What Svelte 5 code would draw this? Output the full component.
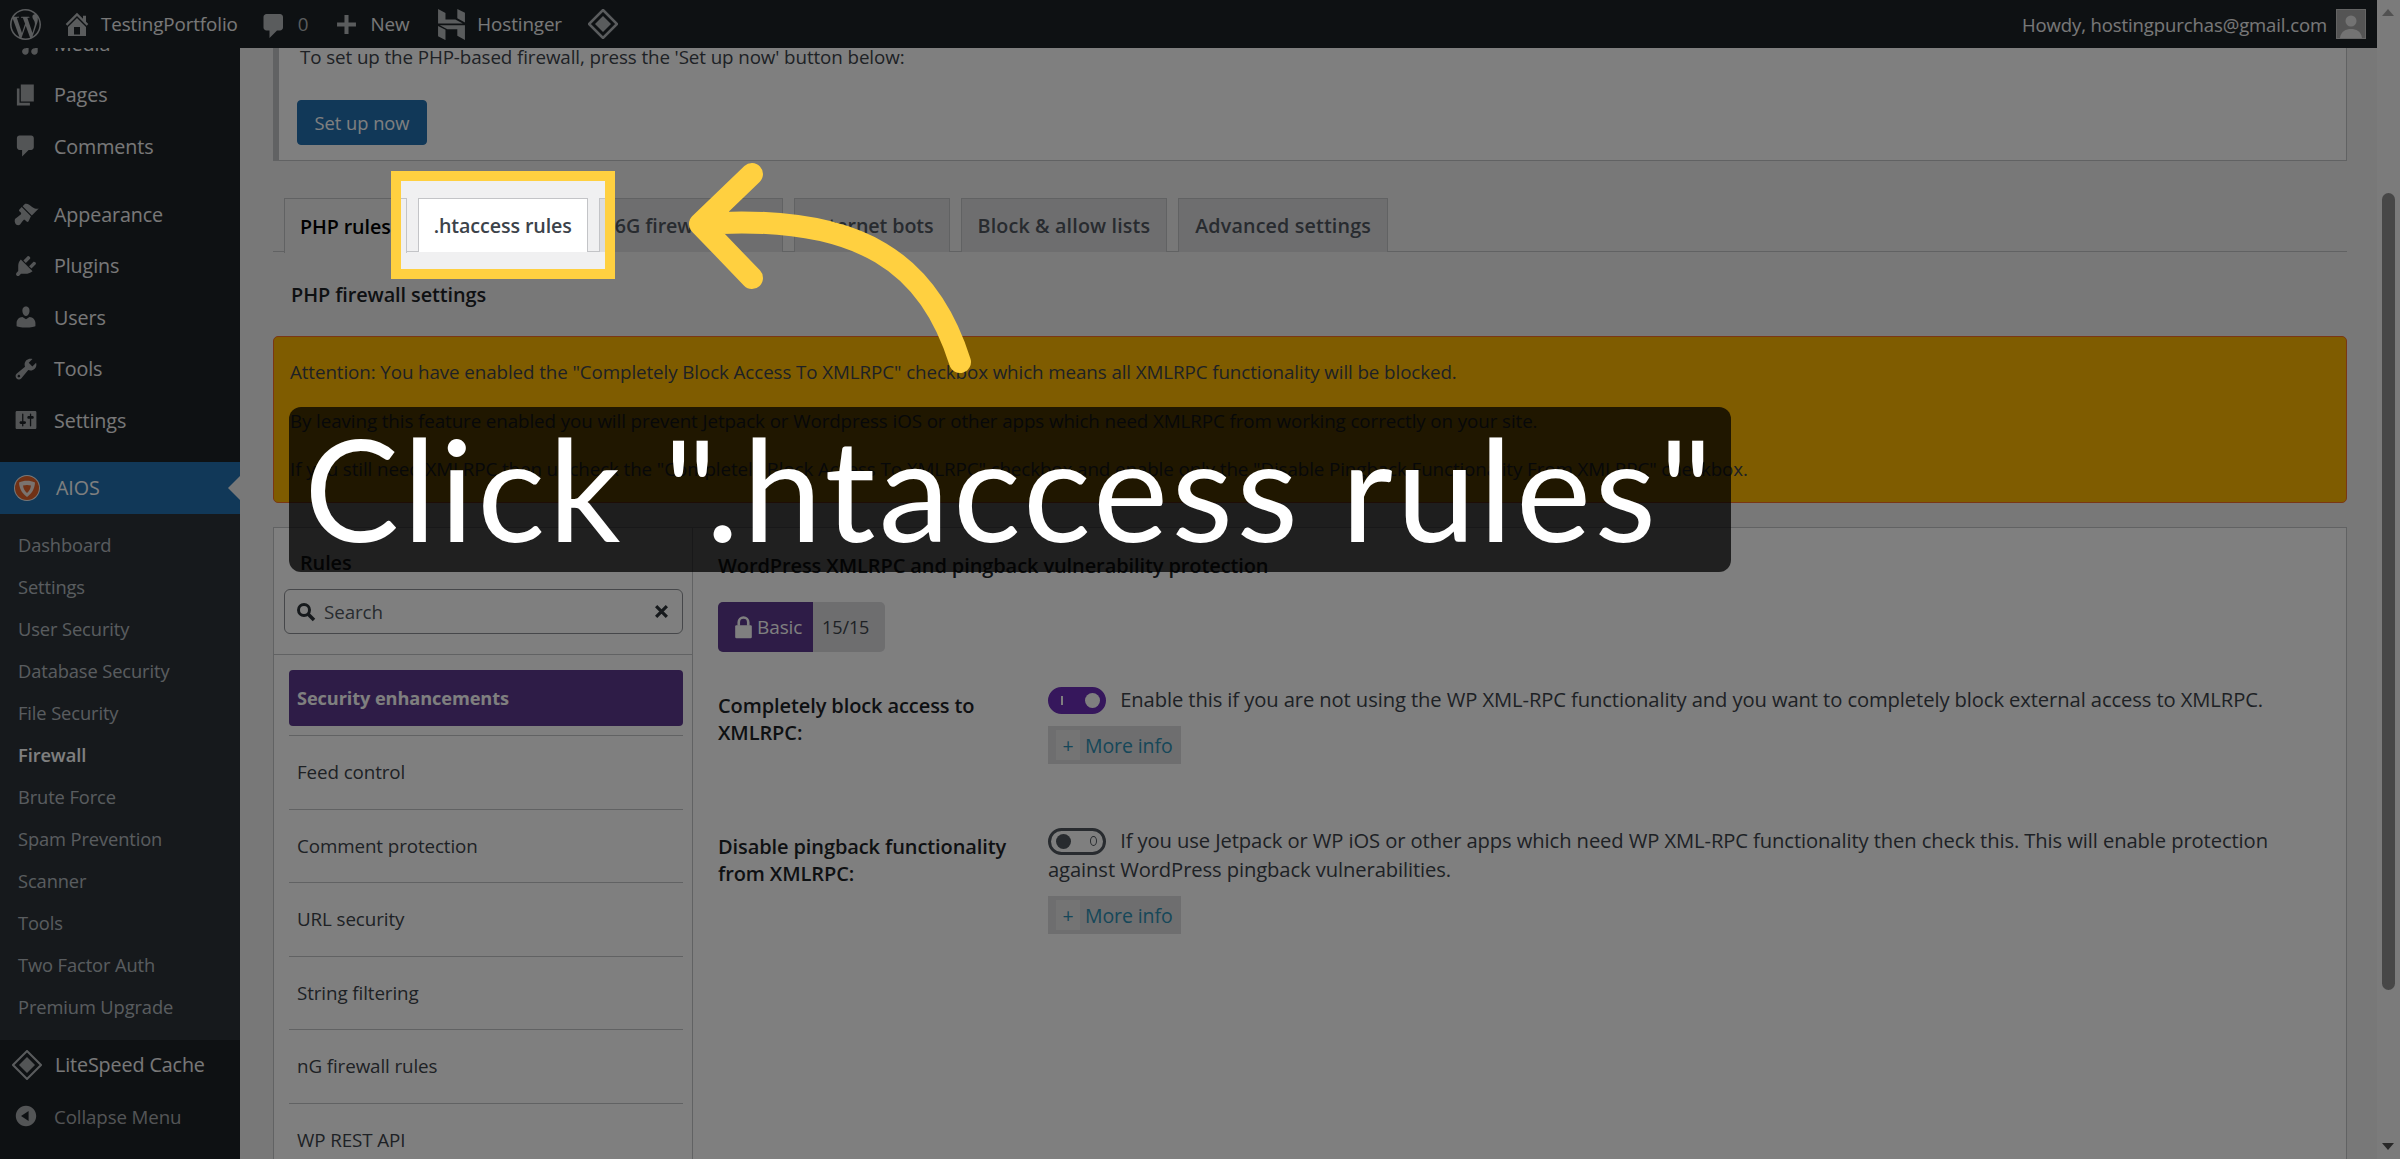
<script>
	const ICONS = {
		media: 'M13 11V4c0-.55-.45-1-1-1h-1.67L9 1H5L3.67 3H2c-.55 0-1 .45-1 1v7c0 .55.45 1 1 1h10c.55 0 1-.45 1-1zM7 4.5c1.38 0 2.5 1.12 2.5 2.5S8.38 9.5 7 9.5 4.5 8.38 4.5 7 5.62 4.5 7 4.5zM14 6h5v10.5c0 1.38-1.12 2.5-2.5 2.5S14 17.88 14 16.5s1.12-2.5 2.5-2.5c.17 0 .34.02.5.05V9h-3V6zm-4 8.05V13h2v3.5c0 1.38-1.12 2.5-2.5 2.5S7 17.88 7 16.5 8.12 14 9.5 14c.17 0 .34.02.5.05z',
		pages: 'M6 15V2h10v13H6zm-1 1h8v2H3V5h2v11z',
		comments: 'M5 2h9c1.1 0 2 .9 2 2v7c0 1.1-.9 2-2 2h-2l-5 5v-5H5c-1.1 0-2-.9-2-2V4c0-1.1.9-2 2-2z',
		appearance: 'M14.48 11.06L7.41 3.99l1.5-1.5c.5-.56 2.3-.47 3.51.32 1.21.8 1.43 1.28 2.91 2.1 1.18.64 2.45 1.26 4.45.85zm-.71.71L6.7 4.7 4.93 6.47c-.39.39-.39 1.02 0 1.41l1.06 1.06c.39.39.39 1.03 0 1.42-.6.6-1.43 1.11-2.21 1.69-.35.26-.7.53-1.01.84C1.43 13.23.91 15.05 1.64 16.9c.79 1.99 2.85 2.06 3.81 1.1.31-.31.58-.66.84-1.01.58-.78 1.09-1.61 1.69-2.21.39-.39 1.03-.39 1.42 0l1.06 1.06c.39.39 1.02.39 1.41 0z',
		plugins: 'M13.11 4.36L9.87 7.6 8 5.73l3.24-3.24c.35-.34 1.05-.2 1.56.32.52.51.66 1.21.31 1.55zm-8 1.77l.91-1.12 9.01 9.01-1.19.84c-.71.71-2.63 1.16-3.82 1.16H6.14L4.9 17.26c-.59.59-1.54.59-2.12 0-.59-.58-.59-1.53 0-2.12l1.24-1.24v-3.88c0-1.13.4-3.19 1.09-3.89zm7.26 3.97l3.24-3.24c.34-.35 1.04-.21 1.55.31.52.51.66 1.21.31 1.55l-3.24 3.25z',
		users: 'M10 9.25c-2.27 0-2.73-3.44-2.73-3.44C7 4.02 7.82 2 9.97 2c2.16 0 2.98 2.02 2.71 3.81 0 0-.41 3.44-2.68 3.44zm0 2.57L12.72 10c2.39 0 4.52 2.33 4.52 4.53v2.49s-3.65 1.13-7.24 1.13c-3.65 0-7.24-1.13-7.24-1.13v-2.49c0-2.25 1.94-4.48 4.47-4.48z',
		tools: 'M16.68 9.77c-1.34 1.34-3.3 1.67-4.95.99l-5.41 6.52c-.99.99-2.59.99-3.58 0s-.99-2.59 0-3.57l6.52-5.42c-.68-1.65-.35-3.61.99-4.95 1.28-1.28 3.12-1.62 4.72-1.06l-2.89 2.89 2.82 2.82 2.86-2.87c.53 1.58.18 3.39-1.08 4.65zM3.81 16.21c.4.39 1.04.39 1.43 0 .4-.4.4-1.04 0-1.43-.39-.4-1.03-.4-1.43 0-.39.39-.39 1.03 0 1.43z',
		settings: 'M18 16V4c0-.55-.45-1-1-1H3c-.55 0-1 .45-1 1v12c0 .55.45 1 1 1h14c.55 0 1-.45 1-1zM8 11h1c.55 0 1 .45 1 1s-.45 1-1 1H8v1.5c0 .28-.22.5-.5.5s-.5-.22-.5-.5V13H6c-.55 0-1-.45-1-1s.45-1 1-1h1V5.5c0-.28.22-.5.5-.5s.5.22.5.5V11zm5-2h-1c-.55 0-1-.45-1-1s.45-1 1-1h1V5.5c0-.28.22-.5.5-.5s.5.22.5.5V7h1c.55 0 1 .45 1 1s-.45 1-1 1h-1v5.5c0 .28-.22.5-.5.5s-.5-.22-.5-.5V9z',
		collapse: 'M10 2.16c4.33 0 7.84 3.51 7.84 7.84s-3.51 7.84-7.84 7.84S2.16 14.33 2.16 10 5.71 2.16 10 2.16zm2 11.72V6.12L6.18 9.97z',
		home: 'M16 8.5l1.53 1.53-1.06 1.06L10 4.62l-6.47 6.47-1.06-1.06L10 2.5l4 4v-2h2v4zm-6-2.46l6 5.99V18H4v-5.97zM12 17v-5H8v5h4z'
	};
	const WP_LOGO = 'M21.469 6.825c.84 1.537 1.318 3.3 1.318 5.175 0 3.979-2.156 7.456-5.363 9.325l3.295-9.527c.615-1.54.82-2.771.82-3.864 0-.405-.026-.78-.07-1.11m-7.981.105c.647-.03 1.232-.105 1.232-.105.582-.075.514-.93-.067-.899 0 0-1.755.135-2.88.135-1.064 0-2.85-.15-2.85-.15-.585-.03-.661.855-.075.885 0 0 .54.061 1.125.09l1.68 4.605-2.37 7.08L5.354 6.9c.649-.03 1.234-.1 1.234-.1.585-.075.516-.93-.065-.896 0 0-1.746.138-2.874.138-.2 0-.438-.008-.69-.015C4.911 3.15 8.235 1.215 12 1.215c2.809 0 5.365 1.072 7.286 2.833-.046-.003-.091-.009-.141-.009-1.06 0-1.812.923-1.812 1.914 0 .89.513 1.643 1.06 2.531.411.72.89 1.643.89 2.977 0 .915-.354 1.994-.821 3.479l-1.075 3.585-3.9-11.61.001.014zM12 22.784c-1.059 0-2.081-.153-3.048-.437l3.237-9.406 3.315 9.087c.024.053.05.101.078.149-1.12.393-2.325.609-3.582.609M1.211 12c0-1.564.336-3.05.935-4.39L7.29 21.709C3.694 19.96 1.212 16.271 1.211 12M12 0C5.385 0 0 5.385 0 12s5.385 12 12 12 12-5.385 12-12S18.615 0 12 0';

	const topMenu = [
		{ label: 'Media', icon: 'media' },
		{ label: 'Pages', icon: 'pages' },
		{ label: 'Comments', icon: 'comments', sep: true },
		{ label: 'Appearance', icon: 'appearance' },
		{ label: 'Plugins', icon: 'plugins' },
		{ label: 'Users', icon: 'users' },
		{ label: 'Tools', icon: 'tools' },
		{ label: 'Settings', icon: 'settings' }
	];
	const subMenu = ['Dashboard', 'Settings', 'User Security', 'Database Security', 'File Security', 'Firewall', 'Brute Force', 'Spam Prevention', 'Scanner', 'Tools', 'Two Factor Auth', 'Premium Upgrade'];
	const tabs = [
		{ label: 'PHP rules', active: true },
		{ label: '.htaccess rules', hover: true },
		{ label: '6G firewall rules' },
		{ label: 'Internet bots' },
		{ label: 'Block & allow lists' },
		{ label: 'Advanced settings' }
	];
	const ruleGroups = ['Feed control', 'Comment protection', 'URL security', 'String filtering', 'nG firewall rules', 'WP REST API'];
</script>

<div class="page">
	<div class="app">
		<header class="adminbar">
			<svg class="wp" viewBox="0 0 24 24"><path d={WP_LOGO} /></svg>
			<span class="bar-item site">
				<svg viewBox="0 0 20 20"><path d={ICONS.home} /></svg>
				TestingPortfolio
			</span>
			<span class="bar-item count">
				<svg viewBox="0 0 20 20"><path d={ICONS.comments} /></svg>
				<span class="zero">0</span>
			</span>
			<span class="bar-item new">
				<svg viewBox="0 0 20 20"><path d="M8.5 3h3v5.5H17v3h-5.5V17h-3v-5.5H3v-3h5.5z" /></svg>
				New
			</span>
			<span class="bar-item host">
				<svg viewBox="1 0 22 24" preserveAspectRatio="none">
					<path d="M16.415 0v7.16l5.785 3.384V2.922ZM1.8 0v11.237h18.815L14.89 8.09l-7.457-.003V3.086ZM16.415 20.792V15.74H8.845L3.077 12.6H22.2V24ZM1.8 13.123v7.957l5.633 3.001v-7.93Z" />
				</svg>
				Hostinger
			</span>
			<svg class="lsc" viewBox="0 0 30 30">
				<path d="M15 1l14 14-14 14L1 15z" fill="none" stroke="currentColor" stroke-width="2.5" />
				<path d="M15 7l8 8-8 8-8-8z" />
			</svg>
			<span class="howdy">Howdy, hostingpurchas@gmail.com</span>
			<span class="avatar">
				<svg viewBox="0 0 28 28"><circle cx="14" cy="11" r="5.5" /><path d="M3 28c1-7 6-9 11-9s10 2 11 9z" /></svg>
			</span>
		</header>

		<aside class="sidebar">
			<ul class="menu">
				{#each topMenu as item}
					<li class="menu-row" class:sep={item.sep}>
						<svg viewBox="0 0 20 20"><path d={ICONS[item.icon]} /></svg>
						{item.label}
					</li>
				{/each}
				<li class="menu-row current">
					<svg class="aios" viewBox="0 0 28 28">
						<circle cx="14" cy="14" r="13" fill="#f0f0f1" />
						<circle cx="14" cy="14" r="12" fill="#e2622a" />
						<path d="M6 8.5c5-2.5 11-2.5 16 0-.3 6-3 11-8 14.500-5-3.500-7.700-8.500-8-14.500z" fill="#f5e7df" />
						<path d="M10 11.500c2.600-.8 5.400-.8 8 0-.4 3-1.800 5.500-4 7.500-2.200-2-3.600-4.500-4-7.500z" fill="#e2622a" />
					</svg>
					AIOS
				</li>
				<li class="submenu">
					{#each subMenu as sub}
						<div class="sub-row" class:on={sub === 'Firewall'}>{sub}</div>
					{/each}
				</li>
				<li class="menu-row">
					<svg class="lsc-side" viewBox="0 0 30 30">
						<path d="M15 1l14 14-14 14L1 15z" fill="none" stroke="currentColor" stroke-width="2" />
						<path d="M15 7l8 8-8 8-8-8z" />
					</svg>
					LiteSpeed Cache
				</li>
				<li class="menu-row collapse">
					<svg viewBox="0 0 20 20"><path d={ICONS.collapse} /></svg>
					Collapse Menu
				</li>
			</ul>
		</aside>

		<main class="main">
			<section class="notice">
				<p>To set up the PHP-based firewall, press the 'Set up now' button below:</p>
				<button class="primary">Set up now</button>
			</section>

			<nav class="tabs">
				{#each tabs as tab}
					<span class="tab" class:active={tab.active} class:hover={tab.hover}>{tab.label}</span>
				{/each}
			</nav>

			<h2 class="settings-title">PHP firewall settings</h2>

			<div class="warning">
				<p>Attention: You have enabled the "Completely Block Access To XMLRPC" checkbox which means all XMLRPC functionality will be blocked.</p>
				<p>By leaving this feature enabled you will prevent Jetpack or Wordpress iOS or other apps which need XMLRPC from working correctly on your site.</p>
				<p>If you still need XMLRPC then uncheck the "Completely Block Access To XMLRPC" checkbox and enable only the "Disable Pingback Functionality From XMLRPC" checkbox.</p>
			</div>

			<section class="panel">
				<div class="rules">
					<h3>Rules</h3>
					<div class="search">
						<svg class="mag" viewBox="0 0 20 20"><circle cx="8" cy="8" r="5.500" fill="none" stroke="currentColor" stroke-width="3" /><path d="M12 12l6 6" stroke="currentColor" stroke-width="3.500" /></svg>
						<span>Search</span>
						<svg class="clear" viewBox="0 0 14 14"><path d="M2 2l10 10M12 2L2 12" stroke="currentColor" stroke-width="3" /></svg>
					</div>
					<div class="rule-list">
						<div class="rule selected"><span>Security enhancements</span></div>
						{#each ruleGroups as rule}
							<div class="rule">{rule}</div>
						{/each}
					</div>
				</div>

				<div class="detail">
					<h3>WordPress XMLRPC and pingback vulnerability protection</h3>
					<div class="badge">
						<span class="level">
							<svg viewBox="0 0 16 20"><path d="M4 9V6a4 4 0 0 1 8 0v3" fill="none" stroke="currentColor" stroke-width="2.200" /><rect x="1" y="8.500" width="14" height="11" rx="1" /></svg>
							Basic
						</span>
						<span class="score">15/15</span>
					</div>

					<div class="field first">
						<div class="field-label">Completely block access to XMLRPC:</div>
						<div class="field-body">
							<span class="toggle on"></span>
							<span>Enable this if you are not using the WP XML-RPC functionality and you want to completely block external access to XMLRPC.</span>
							<div class="more"><span class="plus">+</span>More info</div>
						</div>
					</div>

					<div class="field">
						<div class="field-label">Disable pingback functionality from XMLRPC:</div>
						<div class="field-body">
							<span class="toggle"></span>
							<span>If you use Jetpack or WP iOS or other apps which need WP XML-RPC functionality then check this. This will enable protection against WordPress pingback vulnerabilities.</span>
							<div class="more"><span class="plus">+</span>More info</div>
						</div>
					</div>
				</div>
			</section>
		</main>
	</div>

	<div class="scrollbar">
		<span class="arrow up"></span>
		<span class="thumb"></span>
		<span class="arrow down"></span>
	</div>

	<!-- tutorial overlay -->
	<div class="spotlight"></div>
	<svg class="pointer" viewBox="0 0 300 230">
		<path d="M280 205C250 110 185 55 20 67M72 17L20 67l52 54" fill="none" stroke="#ffd040" stroke-width="22" stroke-linecap="round" stroke-linejoin="round" />
	</svg>
	<div class="caption">Click ".htaccess rules"</div>
</div>

<style>
	:global(body) {
		margin: 0;
		background: #f0f0f1;
		overflow: hidden;
	}

	.page {
		position: relative;
		display: flex;
		width: 2400px;
		height: 1159px;
		overflow: hidden;
		font-family: 'Open Sans', sans-serif;
		font-size: 18.8px;
		letter-spacing: -0.1px;
		color: #3c434a;
	}

	.app {
		position: relative;
		flex: 1;
		display: flex;
		min-width: 0;
	}

	/* Admin bar */
	.adminbar {
		position: absolute;
		top: 0;
		left: 0;
		right: 0;
		height: 48px;
		z-index: 5;
		display: flex;
		align-items: center;
		background: #1d2327;
		color: #f0f0f1;
		fill: #b4b8bb;
		font-size: 18.8px;
	}

	.adminbar svg {
		flex: none;
		fill: #b4b8bb;
	}

	.wp {
		width: 31px;
		height: 31px;
		margin-left: 10px;
	}

	.bar-item {
		display: flex;
		align-items: center;
	}

	.site {
		margin-left: 23px;
		gap: 9px;
	}

	.site svg {
		width: 30px;
		height: 30px;
		margin-left: -2px;
	}

	.count {
		margin-left: 21.5px;
		gap: 8.5px;
	}

	.count svg {
		width: 30px;
		height: 30px;
		margin-top: 4px;
	}

	.zero {
		color: #b4b8bb;
	}

	.new {
		margin-left: 25px;
		gap: 10px;
	}

	.new svg {
		width: 27px;
		height: 27px;
	}

	.host {
		margin-left: 28px;
		gap: 11px;
	}

	.host svg {
		width: 29px;
		height: 31px;
	}

	.lsc {
		width: 30px;
		height: 30px;
		margin-left: 26px;
		color: #b4b8bb;
	}

	.howdy {
		margin-left: auto;
		font-size: 18.5px;
	}

	.avatar {
		display: block;
		width: 28px;
		height: 28px;
		margin: 0 11px 0 9px;
		background: #a9a9a9;
		border: 1px solid #c8c8c8;
		overflow: hidden;
	}

	.avatar svg {
		display: block;
		width: 100%;
		height: 100%;
		fill: #e6e6e6;
	}

	/* Left menu */
	.sidebar {
		flex: none;
		width: 240px;
		background: #1d2327;
		color: #f0f0f1;
		overflow: hidden;
	}

	.menu {
		list-style: none;
		margin: 18px 0 0;
		padding: 0;
	}

	.menu-row {
		display: flex;
		align-items: center;
		height: 51.5px;
		padding-left: 13px;
		gap: 15px;
		font-size: 19.7px;
		padding-bottom: 1px;
		box-sizing: border-box;
	}

	.menu-row svg {
		flex: none;
		width: 26px;
		height: 26px;
		fill: #a7aaad;
	}

	.menu-row.sep {
		margin-bottom: 16.5px;
	}

	.menu-row:nth-child(8) {
		margin-bottom: 15.5px;
	}

	.menu-row.current {
		position: relative;
		height: 52px;
		background: #2271b1;
		color: #fff;
	}

	.menu-row.current::after {
		content: '';
		position: absolute;
		right: 0;
		top: 50%;
		margin-top: -12px;
		border: 12px solid transparent;
		border-right-color: #f0f0f1;
	}

	.menu-row .aios {
		width: 28px;
		height: 28px;
	}

	.menu-row .lsc-side {
		width: 30px;
		height: 30px;
		margin-left: -1px;
		margin-right: -2px;
		color: #b4b8bb;
	}

	.collapse {
		color: #a7aaad;
		font-size: 18.7px;
	}

	.submenu {
		padding: 9.5px 0 12px;
		background: #2c3338;
		color: rgba(240, 246, 252, 0.7);
		font-size: 18.3px;
	}

	.sub-row {
		display: flex;
		align-items: center;
		height: 42px;
		padding-left: 18px;
	}

	.sub-row.on {
		color: #fff;
		font-weight: 600;
	}

	/* Content */
	.main {
		flex: 1;
		min-width: 0;
		padding: 31px 30px 0 33px;
	}

	.notice {
		height: 130px;
		box-sizing: border-box;
		padding: 12px 18px 0 18px;
		background: #fff;
		border: 1px solid #c3c4c7;
		border-left: 6px solid #c3c4c7;
	}

	.notice p {
		margin: 0 0 0 3px;
		line-height: 27px;
	}

	.primary {
		display: block;
		width: 130px;
		height: 45px;
		margin-top: 29px;
		padding: 0;
		background: #2271b1;
		border: 1px solid #2271b1;
		border-radius: 4px;
		color: #fff;
		font: inherit;
		font-size: 18.3px;
	}

	.tabs {
		display: flex;
		gap: 11px;
		height: 54px;
		margin-top: 37px;
		box-sizing: border-box;
		padding-left: 11px;
		border-bottom: 1px solid #c3c4c7;
	}

	.tab {
		display: flex;
		align-items: center;
		height: 53px;
		padding: 0 15px;
		background: #dcdcde;
		border: 1px solid #c3c4c7;
		border-bottom: 0;
		color: #50575e;
		font-size: 19.7px;
		font-weight: 600;
		white-space: nowrap;
	}

	.tab:nth-child(n + 5) {
		letter-spacing: 0.15px;
		padding: 0 16px;
	}

	.tab.active {
		height: 54px;
		background: #f0f0f1;
		color: #000;
	}

	.tab.hover {
		background: #fff;
		color: #3c434a;
	}

	.settings-title {
		margin: 29px 0 0 18px;
		font-size: 19.9px;
		line-height: 27px;
		font-weight: 600;
		color: #1d2327;
	}

	.warning {
		height: 167px;
		box-sizing: border-box;
		margin-top: 28px;
		padding: 22px 15px 0 16px;
		background: #ffb900;
		border: 1px solid #f56e28;
		border-radius: 5px;
		color: #3c434a;
	}

	.warning p {
		margin: 0 0 21.5px;
		line-height: 27px;
	}

	.panel {
		display: grid;
		grid-template-columns: 419px 1fr;
		height: 660px;
		box-sizing: border-box;
		margin-top: 24px;
		background: #fff;
		border: 1px solid #c3c4c7;
	}

	.rules {
		border-right: 1px solid #c3c4c7;
	}

	.rules h3 {
		margin: 21px 0 0 26px;
		font-size: 19.9px;
		line-height: 27px;
		font-weight: 600;
		color: #1d2327;
	}

	.search {
		display: flex;
		align-items: center;
		height: 45px;
		box-sizing: border-box;
		margin: 13px 9px 0 10px;
		padding: 0 13px 0 11px;
		border: 1px solid #8c8f94;
		border-radius: 6px;
		color: #50575e;
	}

	.mag {
		width: 20px;
		height: 20px;
		margin-right: 8px;
		color: #2c3338;
	}

	.clear {
		width: 15px;
		height: 15px;
		margin-left: auto;
		color: #2c3338;
	}

	.rule-list {
		margin-top: 20px;
		padding: 15px 9px 0 15px;
		border-top: 1px solid #c3c4c7;
	}

	.rule {
		display: flex;
		align-items: center;
		height: 73.5px;
		box-sizing: border-box;
		padding: 0 8px;
		border-top: 1px solid #c3c4c7;
	}

	.rule.selected {
		height: 65px;
		padding: 0 0 9px;
		border-top: 0;
	}

	.rule.selected span {
		display: flex;
		align-items: center;
		width: 100%;
		height: 56px;
		box-sizing: border-box;
		padding-left: 8px;
		background: #5c388e;
		border-radius: 4px;
		color: #fff;
		font-size: 18.2px;
		font-weight: 700;
	}

	.detail {
		padding: 0 30px 0 25px;
	}

	.detail h3 {
		margin: 24px 0 0;
		font-size: 20px;
		line-height: 27px;
		font-weight: 600;
		color: #1d2327;
	}

	.badge {
		display: flex;
		width: 167px;
		height: 50px;
		margin-top: 23px;
		background: #dcdcde;
		border-radius: 5px;
		overflow: hidden;
	}

	.level {
		display: flex;
		align-items: center;
		gap: 4px;
		width: 95px;
		box-sizing: border-box;
		padding-left: 16px;
		background: #5c388e;
		color: #fff;
		font-size: 19px;
	}

	.level svg {
		flex: none;
		width: 19px;
		height: 24px;
		fill: currentColor;
	}

	.score {
		align-self: center;
		margin-left: 9px;
		font-size: 18px;
	}

	.field {
		display: grid;
		grid-template-columns: 330px 1fr;
		margin-top: 62px;
	}

	.field.first {
		margin-top: 33px;
	}

	.field-label {
		width: 300px;
		padding-top: 7px;
		font-size: 20px;
		font-weight: 600;
		line-height: 27px;
		color: #1d2327;
	}

	.field-body {
		font-size: 20.2px;
		line-height: 29px;
	}

	.toggle {
		position: relative;
		display: inline-block;
		width: 58px;
		height: 27px;
		box-sizing: border-box;
		margin-right: 9px;
		vertical-align: -7px;
		background: #fff;
		border: 3px solid #50575e;
		border-radius: 14px;
	}

	.toggle::before {
		content: '';
		position: absolute;
		left: 5px;
		top: 3px;
		width: 15px;
		height: 15px;
		border-radius: 50%;
		background: #50575e;
	}

	.toggle::after {
		content: '';
		position: absolute;
		right: 6px;
		top: 5px;
		width: 7px;
		height: 10px;
		box-sizing: border-box;
		border: 1px solid #50575e;
		border-radius: 50%;
	}

	.toggle.on {
		background: #6c2eb9;
		border-color: #6c2eb9;
	}

	.toggle.on::before {
		left: auto;
		right: 3px;
		background: #fff;
	}

	.toggle.on::after {
		right: auto;
		left: 10px;
		top: 6px;
		width: 2px;
		height: 9px;
		border: 0;
		border-radius: 0;
		background: #fff;
	}

	.more {
		display: flex;
		align-items: center;
		width: 133px;
		height: 38px;
		box-sizing: border-box;
		margin-top: 12px;
		padding: 4px 8px;
		background: #dcdcde;
		color: #2d8fb3;
		font-size: 19.5px;
	}

	.plus {
		display: flex;
		align-items: center;
		justify-content: center;
		width: 24px;
		height: 100%;
		margin-right: 5px;
		background: #e8e8e9;
	}

	/* Browser scrollbar */
	.scrollbar {
		position: relative;
		flex: none;
		width: 23px;
		background: #f6f6f6;
	}

	.thumb {
		position: absolute;
		left: 5px;
		top: 193px;
		width: 13px;
		height: 797px;
		background: #8f8f8f;
		border-radius: 7px;
	}

	.arrow {
		position: absolute;
		left: 5px;
		border: 6.5px solid transparent;
	}

	.arrow.up {
		top: 3px;
		border-bottom: 7px solid #a3a3a3;
	}

	.arrow.down {
		bottom: 3px;
		border-top: 7px solid #505050;
	}

	/* Tutorial overlay */
	.spotlight {
		position: absolute;
		left: 391px;
		top: 171px;
		width: 224px;
		height: 108px;
		box-sizing: border-box;
		z-index: 20;
		border: 10px solid #ffd040;
		box-shadow: 0 0 0 3000px rgba(0, 0, 0, 0.5);
	}

	.pointer {
		position: absolute;
		left: 680px;
		top: 157px;
		width: 300px;
		height: 230px;
		z-index: 30;
	}

	.caption {
		position: absolute;
		left: 289px;
		top: 407px;
		width: 1442px;
		height: 165px;
		box-sizing: border-box;
		padding-bottom: 6px;
		z-index: 30;
		display: flex;
		align-items: center;
		justify-content: center;
		background: rgba(0, 0, 0, 0.75);
		border-radius: 12px;
		color: #fff;
		font-family: Lato, sans-serif;
		font-size: 142px;
		line-height: 1;
		letter-spacing: 3.5px;
		white-space: nowrap;
	}
</style>
